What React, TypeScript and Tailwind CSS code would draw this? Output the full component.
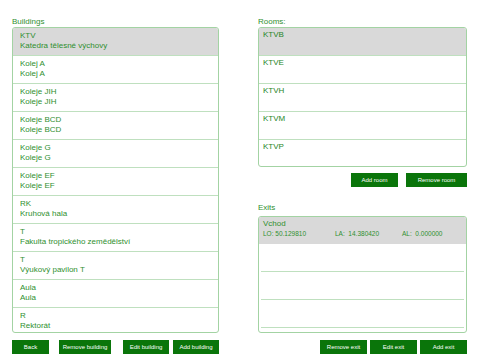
import React from "react";

const buildings: [string, string][] = [
  ["KTV", "Katedra tělesné výchovy"],
  ["Kolej A", "Kolej A"],
  ["Koleje JIH", "Koleje JIH"],
  ["Koleje BCD", "Koleje BCD"],
  ["Koleje G", "Koleje G"],
  ["Koleje EF", "Koleje EF"],
  ["RK", "Kruhová hala"],
  ["T", "Fakulta tropického zemědělství"],
  ["T", "Výukový pavilon T"],
  ["Aula", "Aula"],
  ["R", "Rektorát"],
];

const rooms = ["KTVB", "KTVE", "KTVH", "KTVM", "KTVP"];

function Btn({ label, w, cls = "" }: { label: string; w: string; cls?: string }) {
  return (
    <div
      className={`h-[14px] bg-[#0a750a] text-white text-[6px] leading-[14px] text-center ${w} ${cls}`}
    >
      {label}
    </div>
  );
}

export default function App() {
  return (
    <div
      className="w-[480px] h-[360px] bg-white flex text-[#2f8f2f] overflow-hidden"
      style={{ fontFamily: '"Liberation Sans", Arial, sans-serif' }}
    >
      {/* Left column */}
      <div className="ml-[12px] w-[207px] flex flex-col pt-[17px]">
        <div className="text-[8px] leading-[10px] h-[10px]">Buildings</div>
        <div className="h-[306px] border border-[#a3d3a3] rounded-[3px] overflow-hidden">
          {buildings.map(([a, b], i) => (
            <div
              key={i}
              className={`h-[28px] shrink-0 border-b border-[#bfe0bf] pl-[7px] pt-[3px] text-[8px] leading-[9.5px] ${
                i === 0 ? "bg-[#d9d9d9]" : ""
              }`}
            >
              <div>{a}</div>
              <div>{b}</div>
            </div>
          ))}
        </div>
        <div className="flex mt-[7px]">
          <Btn label="Back" w="w-[37px]" />
          <Btn label="Remove building" w="w-[52px]" cls="ml-[10px]" />
          <Btn label="Edit building" w="w-[46px]" cls="ml-[12px]" />
          <Btn label="Add building" w="w-[46px]" cls="ml-[4px]" />
        </div>
      </div>

      {/* Right column */}
      <div className="ml-[39px] w-[209px] flex flex-col pt-[17px]">
        <div className="text-[8px] leading-[10px] h-[10px]">Rooms:</div>
        <div className="h-[140px] border border-[#a3d3a3] rounded-[3px] overflow-hidden">
          {rooms.map((r, i) => (
            <div
              key={r}
              className={`h-[28px] ${i < 4 ? "border-b border-[#bfe0bf]" : ""} pl-[4px] pt-[2px] text-[8px] leading-[10px] text-[#268626] ${
                i === 0 ? "bg-[#d9d9d9]" : ""
              }`}
            >
              {r}
            </div>
          ))}
        </div>
        <div className="flex justify-end mt-[6px]">
          <Btn label="Add room" w="w-[47px]" />
          <Btn label="Remove room" w="w-[61px]" cls="ml-[8px]" />
        </div>

        <div className="text-[8px] leading-[10px] h-[10px] mt-[16px]">Exits</div>
        <div className="h-[117px] mt-[3px] border border-[#a3d3a3] rounded-[3px] overflow-hidden">
          <div className="h-[27px] bg-[#d9d9d9] pl-[4px] pt-[2px]">
            <div className="text-[8px] leading-[10px]">Vchod</div>
            <div className="flex text-[6.5px] leading-[10px]">
              <span className="w-[72px]">LO: 50.129810</span>
              <span className="w-[67px]">LA:&nbsp; 14.380420</span>
              <span>AL:&nbsp; 0.000000</span>
            </div>
          </div>
          {[0, 1, 2, 3].map((i) => (
            <div key={i} className="h-[28px] mx-[2px] border-b border-[#bfe0bf]" />
          ))}
        </div>
        <div className="flex justify-end mt-[7px]">
          <Btn label="Remove exit" w="w-[47px]" />
          <Btn label="Edit exit" w="w-[47px]" cls="ml-[3px]" />
          <Btn label="Add exit" w="w-[47px]" cls="ml-[3px]" />
        </div>
      </div>
    </div>
  );
}
